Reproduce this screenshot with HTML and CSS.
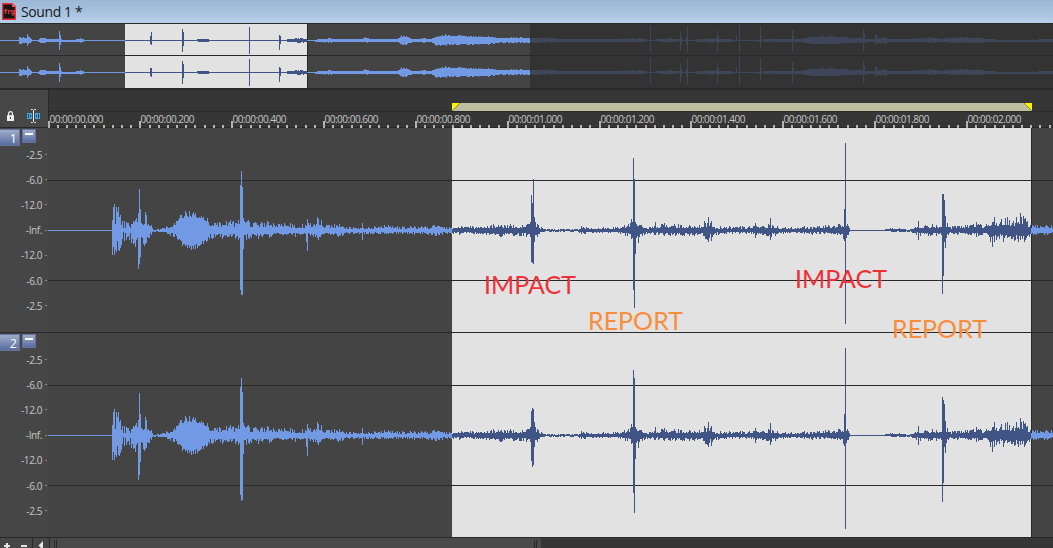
FILE: index.html
```html
<!DOCTYPE html>
<html lang="en">
<head>
    <meta charset="UTF-8">
    <meta name="viewport" content="width=device-width, initial-scale=1.0">
    <title>Sound 1 *</title>
    <link rel="stylesheet" href="styles.css">
</head>
<body>
    <div class="window">
        <header class="titlebar">
            <svg class="app-icon" width="14" height="17" viewBox="0 0 14 17">
                <path d="M.7.7h9.6l3 3v12.6H.7z" fill="#191414" stroke="#e8323a" stroke-width="1.4"/>
                <path d="M10 0l4 4h-4z" fill="#f2555b"/>
                <text x="1.2" y="11" class="app-icon-text">frg</text>
            </svg>
            <h1>Sound 1 *</h1>
        </header>

        <div class="overview">
            <svg class="overview-channel" data-wave="overview1" width="1053" height="31"></svg>
            <svg class="overview-channel" data-wave="overview2" width="1053" height="32"></svg>
        </div>

        <div class="time-header">
            <div class="tools">
                <svg width="7" height="10" viewBox="0 0 7 10">
                    <path d="M1.6 5V2.6a1.9 1.9 0 0 1 3.8 0V5" fill="none" stroke="#eee" stroke-width="1.2"/>
                    <path d="M0 4.2h7V10H0z" fill="#eee"/>
                    <path d="M3 6h1v2H3z" fill="#444"/>
                </svg>
                <svg width="13" height="14" viewBox="0 0 13 14">
                    <path d="M0 4h13v6H0z" fill="#45a5dc"/>
                    <path d="M1 5h1v4H1zM3 6h1v2H3zM9 6h1v2H9zM11 5h1v4h-1z" fill="#24485c"/>
                    <path d="M5 3h3v8H5z" fill="#444"/>
                    <path d="M4 .5h1.500l1 1 1-1H9M4 13.500h1.500l1-1 1 1H9M6.500 1.500v11" fill="none" stroke="#eee"/>
                </svg>
            </div>
            <div class="time-area">
                <div class="marker-bar"><div class="region"></div></div>
                <svg class="ruler" id="ruler" width="1005" height="16"></svg>
            </div>
        </div>

        <section class="track">
            <aside class="track-head">
                <div class="track-buttons"><span class="track-number">1</span><span class="track-min"></span></div>
                <div class="scale">
                    <span>-2.5</span><span>-6.0</span><span>-12.0</span><span>-Inf.</span><span>-12.0</span><span>-6.0</span><span>-2.5</span>
                </div>
            </aside>
            <svg class="wave" data-wave="track1" width="1005" height="204"></svg>
        </section>

        <section class="track">
            <aside class="track-head">
                <div class="track-buttons"><span class="track-number">2</span><span class="track-min"></span></div>
                <div class="scale">
                    <span>-2.5</span><span>-6.0</span><span>-12.0</span><span>-Inf.</span><span>-12.0</span><span>-6.0</span><span>-2.5</span>
                </div>
            </aside>
            <svg class="wave" data-wave="track2" width="1005" height="204"></svg>
        </section>

        <footer class="scrollbar">
            <div class="zoom-buttons">
                <svg width="32" height="10" viewBox="0 0 32 10">
                    <path d="M4 7h6v2H4zM6 5h2v5H6zM21 7h6v2h-6z" fill="#e6e6e6"/>
                </svg>
            </div>
            <div class="scroll-left">
                <svg width="16" height="10" viewBox="0 0 16 10"><path d="M5.500 7.500l4.500-4.500v9z" fill="#e6e6e6"/></svg>
            </div>
            <div class="thumb"><span class="grip"></span><span class="grip"></span></div>
        </footer>

        <span class="note impact note-1">IMPACT</span>
        <span class="note report note-2">REPORT</span>
        <span class="note impact note-3">IMPACT</span>
        <span class="note report note-4">REPORT</span>
    </div>
    <script src="wave.js"></script>
</body>
</html>
```

FILE: styles.css
```css
:root {
    --bg: #444444;
    --bg-dark: #363636;
    --line: #292929;
    --wave: #7299e3;
    --wave-selected: #405585;
    --selection: #e2e2e2;
    --text: #c6c6c6;
}

* {
    margin: 0;
    padding: 0;
    box-sizing: border-box;
}

body {
    background: var(--bg);
    font-family: "Open Sans", "Noto Sans", sans-serif;
    overflow: hidden;
}

svg {
    display: block;
    flex: none;
}

.window {
    position: relative;
    width: 1053px;
    height: 548px;
    overflow: hidden;
    display: flex;
    flex-direction: column;
}

.titlebar {
    height: 23px;
    flex: none;
    display: flex;
    align-items: center;
    gap: 5px;
    padding: 0 2px;
    background: linear-gradient(#9db8d4, #a5c0dc 45%, #b7d0ea);
}

.titlebar h1 {
    font-size: 14px;
    font-weight: 400;
    line-height: 22px;
    letter-spacing: -0.4px;
    color: #16191d;
}

.app-icon-text {
    font: bold 7px "DejaVu Sans Mono", monospace;
    letter-spacing: -0.4px;
    fill: #ee4148;
}

/* overview */
.overview {
    height: 67px;
    flex: none;
    border-top: 1px solid var(--line);
    border-bottom: 2px solid var(--line);
    display: flex;
    flex-direction: column;
    gap: 1px;
    background: var(--line);
}

.bg { fill: var(--bg); }
.bg-dim { fill: #333333; }
.bg-selected { fill: var(--selection); }
.edge, .level { fill: var(--line); }
.wave-normal { fill: var(--wave); }
.wave-selected { fill: var(--wave-selected); }
.wave-dim { fill: #3e4659; }

/* ruler */
.time-header {
    height: 38px;
    flex: none;
    display: flex;
}

.tools {
    width: 48px;
    display: flex;
    align-items: center;
    gap: 13px;
    padding: 14px 0 0 7px;
    background: #474747;
    border-bottom: 1px solid var(--line);
}

.time-area {
    flex: 1;
    border-left: 1px solid var(--line);
    background: var(--bg-dark);
}

.marker-bar {
    height: 22px;
    border-bottom: 1px solid var(--line);
    padding: 13px 0 0 403px;
}

.region {
    width: 580px;
    height: 8px;
    background:
        linear-gradient(135deg, #fdf500 0 48%, #8f8e39 48% 56%, transparent 56%) left / 8px 8px no-repeat,
        linear-gradient(225deg, #fdf500 0 48%, #8f8e39 48% 56%, transparent 56%) right / 8px 8px no-repeat,
        #bebe9f;
}

.ruler {
    margin-left: -1px;
}

.ruler text {
    font-size: 10px;
    fill: var(--text);
}

.tick { fill: #b4b4b4; }

/* tracks */
.track {
    height: 205px;
    flex: none;
    display: flex;
    border-bottom: 1px solid var(--line);
}

.track-head {
    width: 48px;
    background: #464646;
}

.track-buttons {
    height: 18px;
    display: flex;
    gap: 2px;
    padding-top: 1px;
}

.track-number,
.track-min {
    background-image: linear-gradient(#a0acca, #586c9d);
    border: 1px solid #62739f;
}

.track-number {
    width: 20px;
    height: 17px;
    padding-right: 2px;
    border-left: 0;
    color: #fff;
    font-size: 12.5px;
    line-height: 17px;
    text-align: right;
}

.track-min {
    width: 14px;
    height: 14px;
}

.track-min::before {
    content: "";
    display: block;
    width: 8px;
    height: 2px;
    margin: 3px auto 0;
    background: #fff;
}

.scale {
    display: flex;
    flex-direction: column;
    align-items: flex-end;
    margin-top: -4px;
    padding-right: 1px;
}

.scale span {
    height: 25.2px;
    display: flex;
    align-items: center;
    gap: 3px;
    color: var(--text);
    font-size: 10px;
    letter-spacing: -0.4px;
}

.scale span::after {
    content: "";
    width: 2px;
    height: 1px;
    background: #8a8a8a;
}

/* scrollbar */
.scrollbar {
    height: 10px;
    flex: none;
    display: flex;
    background: var(--bg-dark);
}

.zoom-buttons,
.scroll-left {
    background: #464646;
    border-right: 1px solid var(--line);
}

.zoom-buttons { width: 33px; }
.scroll-left { width: 17px; }

.thumb {
    width: 491px;
    padding: 2px 4px 0;
    display: flex;
    justify-content: space-between;
    background: #4a4a4a;
}

.grip {
    width: 3px;
    height: 8px;
    border: solid var(--line);
    border-width: 0 1px;
}

/* annotations lie over the waveform */
.note {
    position: absolute;
    font: 25px/30px Lato, sans-serif;
    white-space: nowrap;
}

.impact { color: #ee3038; }
.report { color: #fb8c3c; }
.note-1 { left: 484px; top: 269px; }
.note-2 { left: 588px; top: 305px; }
.note-3 { left: 795px; top: 263px; }
.note-4 { left: 892px; top: 313px; }
```

FILE: wave.js
```js
// envelope points: x, level above the centre, level below the centre
const trackEnvelope = [
    [48, 0, 0], [111, 0, 0], [112, 18, 25], [118, 22, 22], [122, 11, 12], [127, 11, 13], [133, 12, 13],
    [137, 16, 18], [142, 14, 15], [146, 17, 14], [150, 7, 6], [153, 1, 1], [160, 1, 1], [166, 4, 2],
    [172, 8, 7], [180, 15, 12], [186, 19, 18], [191, 18, 21], [198, 16, 16], [206, 13, 13], [210, 8, 8],
    [222, 9, 8], [235, 10, 9], [244, 12, 10], [250, 8, 7], [262, 9, 8], [275, 8, 6], [290, 7, 6],
    [305, 6, 6], [314, 9, 6], [318, 12, 9], [325, 6, 6], [340, 6, 6], [344, 3, 3], [360, 3, 3],
    [384, 5, 4], [395, 4, 3], [430, 4, 4], [434, 6, 7], [442, 4, 4], [475, 4, 3], [490, 5, 5],
    [500, 6, 6], [515, 5, 5], [528, 8, 6], [535, 10, 10], [540, 4, 3], [545, 1, 1], [577, 1, 1],
    [583, 3, 4], [590, 2, 2], [618, 3, 2], [626, 6, 5], [631, 11, 9], [637, 11, 14], [642, 5, 5],
    [648, 3, 3], [665, 7, 5], [680, 5, 5], [700, 6, 5], [709, 11, 10], [714, 4, 4], [750, 4, 3],
    [770, 6, 6], [778, 4, 4], [790, 3, 2], [812, 4, 4], [835, 6, 4], [842, 8, 8], [847, 8, 7],
    [850, 0, 0], [878, 0, 0], [892, 2, 1], [910, 1, 1], [916, 4, 4], [925, 5, 5], [938, 6, 6],
    [946, 9, 10], [950, 4, 4], [965, 5, 4], [977, 7, 6], [985, 5, 5], [992, 14, 13], [998, 12, 9],
    [1006, 14, 12], [1012, 9, 10], [1018, 18, 13], [1024, 14, 13], [1030, 5, 5], [1053, 5, 4]
];

const overviewEnvelope = [
    [0, 0, 0], [18, 0, 0], [19, 4, 4], [22, 3, 3], [25, 2, 2], [28, 4, 4], [32, 0, 0], [37, 0, 0],
    [42, 3, 3], [48, 1, 1], [60, 1, 1], [64, 0, 1], [82, 1, 1], [86, 0, 0], [185, 0, 0], [205, 1, 1],
    [215, 0, 0], [282, 0, 0], [296, 2, 2], [302, 2, 2], [309, 0, 0], [320, 1, 1], [328, 2, 2],
    [345, 1, 1], [360, 1, 1], [366, 3, 2], [371, 1, 1], [397, 1, 1], [401, 5, 4], [406, 4, 4],
    [413, 1, 1], [422, 2, 2], [430, 1, 1], [436, 4, 5], [445, 6, 5], [454, 5, 4], [463, 5, 4],
    [474, 4, 4], [485, 4, 4], [500, 2, 2], [515, 3, 2], [530, 2, 2], [548, 3, 2], [562, 1, 1],
    [600, 1, 1], [640, 2, 1], [650, 0, 0], [665, 2, 1], [690, 0, 0], [710, 2, 2], [740, 0, 0],
    [775, 1, 1], [800, 1, 1], [812, 4, 3], [824, 4, 4], [843, 4, 3], [850, 2, 2], [862, 2, 2],
    [870, 1, 1], [884, 3, 3], [890, 1, 1], [905, 1, 1], [920, 2, 1], [931, 3, 2], [940, 1, 1],
    [950, 3, 2], [978, 3, 2], [988, 1, 1], [1010, 0, 1], [1053, 1, 1]
];

const commonPeaks = [
    [112, 10, 25], [113, 23, 17], [114, 26, 25], [115, 6, 20], [116, 23, 22], [118, 23, 20],
    [123, 2, 2], [125, 2, 3], [130, 2, 3],
    [138, 17, 39], [140, 21, 27], [145, 18, 14], [243, 12, 19], [306, 4, 12], [307, 11, 21],
    [317, 13, 8], [362, 7, 10], [534, 13, 12], [581, 4, 4], [635, 8, 24], [655, 8, 5],
    [708, 13, 12], [711, 9, 11], [755, 7, 8], [770, 12, 10], [844, 21, 11], [918, 9, 10],
    [945, 14, 18], [976, 8, 7], [992, 8, 17], [994, 13, 12], [1020, 17, 10]
];

const overviewPeaks = [
    [27, 6, 6], [59, 9, 10], [60, 5, 5], [80, 2, 3], [150, 4, 4], [182, 11, 12], [183, 8, 6],
    [249, 13, 14], [279, 5, 10], [280, 4, 4], [401, 5, 4], [650, 14, 12], [671, 3, 3], [680, 8, 10],
    [681, 4, 5], [686, 3, 5], [687, 14, 12], [717, 10, 12], [718, 4, 3], [736, 4, 1], [739, 15, 13],
    [760, 14, 8], [761, 4, 2], [775, 2, 1], [792, 10, 12], [793, 4, 2], [863, 11, 12], [864, 6, 3],
    [875, 5, 5], [876, 5, 4], [885, 4, 5]
];

const waves = {
    overview1: {
        center: 16, height: 31, left: 0, selection: [125, 307], dimFrom: 530, floor: 0.7,
        envelope: overviewEnvelope, peaks: overviewPeaks.concat([[151, 8, 5]])
    },
    overview2: {
        center: 16, height: 32, left: 0, selection: [125, 307], dimFrom: 530, floor: 0.7,
        envelope: overviewEnvelope, peaks: overviewPeaks.concat([[151, 4, 5]])
    },
    track1: {
        center: 102, height: 204, left: 48, selection: [452, 1031], levels: [52, 152], floor: 0.35,
        envelope: trackEnvelope,
        peaks: commonPeaks.concat([
            [139, 41, 34], [240, 45, 60], [241, 59, 65], [242, 43, 65], [531, 35, 32], [532, 27, 33],
            [533, 51, 34], [633, 72, 60], [634, 51, 78], [845, 87, 94], [942, 36, 64], [943, 36, 46],
            [944, 30, 12]
        ])
    },
    track2: {
        center: 102, height: 204, left: 48, selection: [452, 1031], levels: [52, 152], floor: 0.35,
        envelope: trackEnvelope,
        peaks: commonPeaks.concat([
            [138, 15, 45], [139, 42, 40], [240, 48, 60], [241, 57, 66], [242, 43, 65], [531, 24, 26],
            [532, 27, 32], [533, 26, 30], [633, 65, 58], [634, 57, 78], [845, 87, 94], [942, 38, 67],
            [943, 35, 48], [944, 31, 12]
        ])
    }
};

function noise(seed) {
    return () => {
        seed = (seed * 16807) % 2147483647;
        return seed / 2147483647;
    };
}

function rect(cls, x, y, w, h) {
    return `<rect class="${cls}" x="${x}" y="${y}" width="${w}" height="${h}"/>`;
}

function columns(wave, from, to) {
    const random = noise(4211 + from);
    const peaks = new Map(wave.peaks.map(p => [p[0], p]));
    let i = 0;
    let d = '';
    for (let x = from; x < to; x++) {
        while (i < wave.envelope.length - 2 && wave.envelope[i + 1][0] <= x) i++;
        const a = wave.envelope[i];
        const b = wave.envelope[i + 1];
        const t = (x - a[0]) / (b[0] - a[0]);
        // the swell after the first hit is much denser than the rest
        const floor = x > 176 && x < 208 ? 0.7 : wave.floor;
        const level = k => Math.round((a[k] + (b[k] - a[k]) * t) * (floor + (1.05 - floor) * random() ** 1.7));
        let up = level(1);
        let down = level(2);
        if (peaks.has(x)) {
            [, up, down] = peaks.get(x);
            down -= 1;
        }
        d += `M${x - wave.left} ${wave.center - up}h1v${up + down + 1}h-1z`;
    }
    return d;
}

document.querySelectorAll('[data-wave]').forEach(svg => {
    const wave = waves[svg.dataset.wave];
    const [start, end] = wave.selection;
    const dim = wave.dimFrom || 1053;
    const h = wave.height;
    let out = rect('bg', 0, 0, 1053, h);
    if (wave.dimFrom) out += rect('bg-dim', dim, 0, 1053 - dim, h);
    out += rect('bg-selected', start - wave.left, 0, end - start, h);
    (wave.levels || []).forEach(y => out += rect('level', 0, y, 1005, 1));
    out += rect('edge', end - wave.left, 0, 1, h);
    out += `<path class="wave-normal" d="${columns(wave, wave.left, start)}${columns(wave, end, dim)}"/>`;
    out += `<path class="wave-selected" d="${columns(wave, start, end)}"/>`;
    out += `<path class="wave-dim" d="${columns(wave, dim, 1053)}"/>`;
    svg.innerHTML = out;
});

// ruler, a labelled tick every 200 ms
let marks = rect('edge', 0, 15, 1005, 1);
for (let i = 0; i < 110; i++) {
    const x = Math.floor(i * 9.185);
    const major = i % 10 === 0;
    marks += rect('tick', x, major ? 9 : 13, 2, major ? 7 : 3);
    if (major) {
        const ms = i * 20;
        const label = `00:00:0${Math.floor(ms / 1000)}.${String(ms % 1000).padStart(3, '0')}`;
        marks += `<text x="${x + 1.5}" y="11" textLength="54">${label}</text>`;
    }
}
document.getElementById('ruler').innerHTML = marks;
```
